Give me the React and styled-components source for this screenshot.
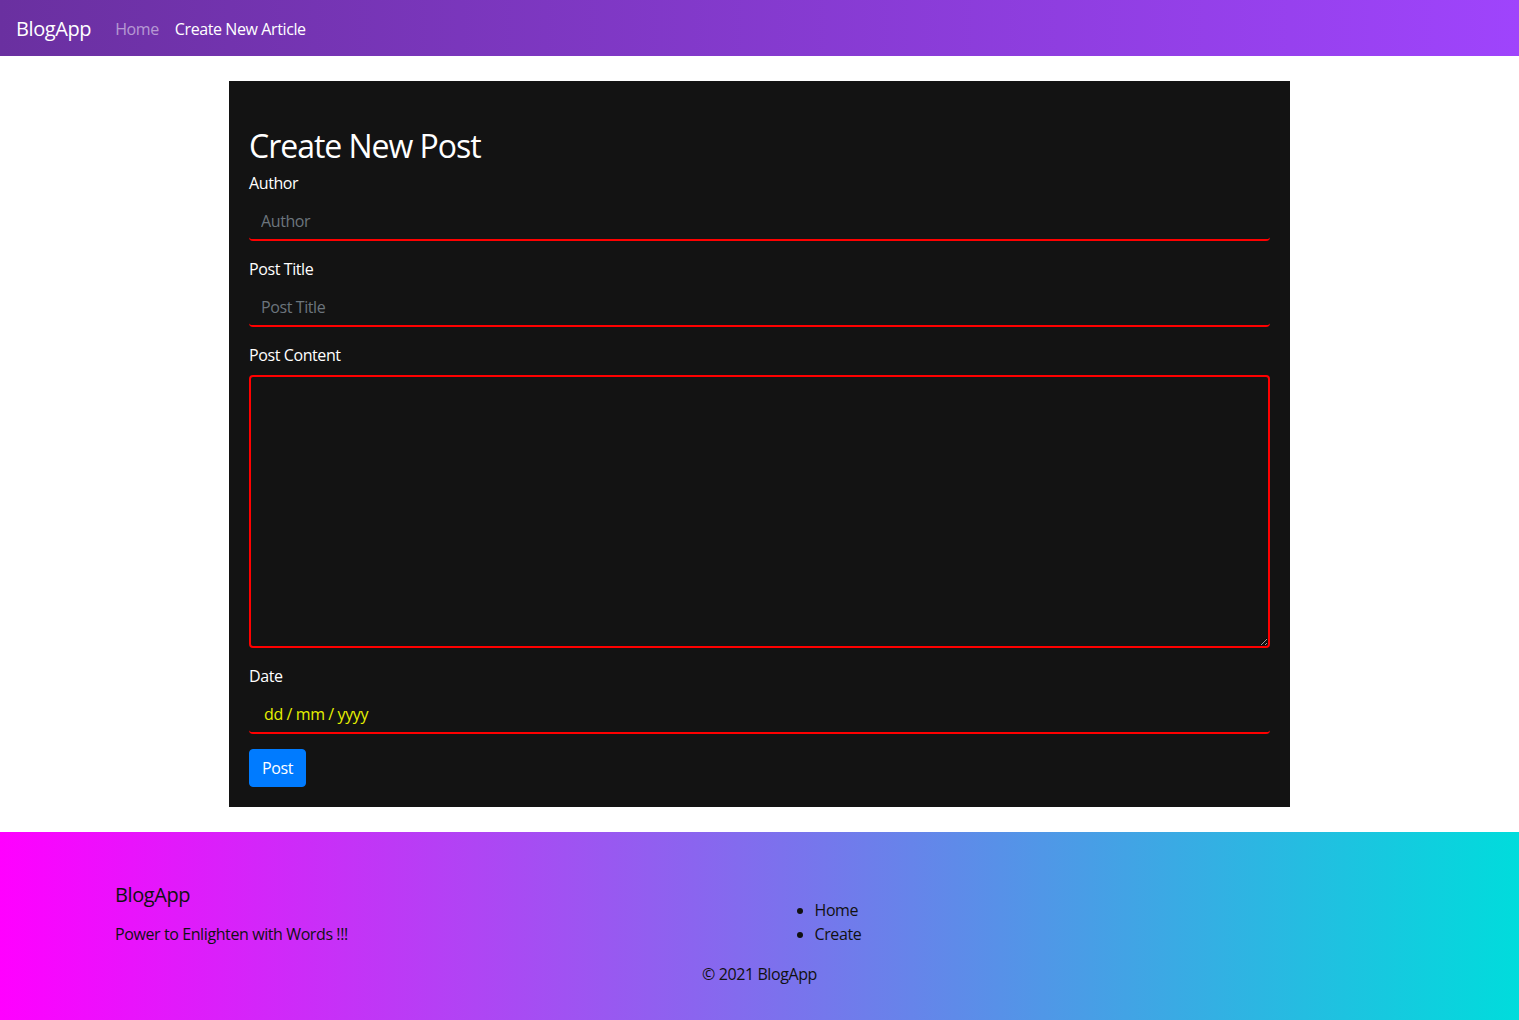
import React from "react";
import styled, { createGlobalStyle } from "styled-components";

const GlobalStyle = createGlobalStyle`
  * { box-sizing: border-box; }
  body {
    margin: 0;
    background: #fff;
    font-family: "Segoe UI", "Open Sans", "Noto Sans", sans-serif;
    font-size: 16px;
    line-height: 1.5;
    letter-spacing: -0.025em;
    color: #212529;
  }
`;

const NavBar = styled.nav`
  display: flex;
  align-items: center;
  height: 56px;
  padding: 2px 16px 0;
  background: linear-gradient(to right, #6a30a0, #9f44fc);
`;

const Brand = styled.a`
  font-size: 20px;
  color: #fff;
  margin-right: 16px;
  text-decoration: none;
`;

const NavLink = styled.a`
  padding: 8px;
  color: ${(p) => (p.$active ? "#fff" : "rgba(255,255,255,0.5)")};
  text-decoration: none;
`;

const Main = styled.main`
  padding: 25px 0;
`;

const Card = styled.div`
  width: 1061px;
  margin: 0 auto;
  background: #131313;
  padding: 46px 20px 20px;
  color: #fff;
`;

const Title = styled.h2`
  margin: 0 0 6px;
  font-size: 32px;
  font-weight: 400;
  line-height: 1.2;
  letter-spacing: -0.032em;
`;

const Group = styled.div`
  margin-bottom: ${(p) => p.$mb || "16px"};
`;

const Label = styled.label`
  display: block;
  margin-bottom: 8px;
  color: #fff;
`;

const Field = styled.input`
  display: block;
  width: 100%;
  height: 38px;
  padding: 6px ${(p) => p.$pad || "12px"};
  font: inherit;
  letter-spacing: inherit;
  color: ${(p) => p.$color || "#fff"};
  background: transparent;
  border: none;
  border-bottom: 2px solid #f00;
  border-radius: 4px;
  outline: none;
  &::placeholder { color: #6c757d; }
`;

const Area = styled.textarea`
  display: block;
  width: 100%;
  height: 273px;
  padding: 6px 12px;
  font: inherit;
  color: #fff;
  background: transparent;
  border: 2px solid #f00;
  border-radius: 4px;
  outline: none;
`;

const PostButton = styled.button`
  font: inherit;
  letter-spacing: inherit;
  color: #fff;
  background: #007bff;
  border: 1px solid #007bff;
  border-radius: 4px;
  padding: 6px 12px;
  height: 38px;
`;

const Footer = styled.footer`
  background: linear-gradient(to right, #ff00ff, #00dcdc);
  padding-top: 51px;
  height: 188px;
  color: #111;
`;

const FooterRow = styled.div`
  display: flex;
  padding: 0 100px;
`;

const FooterCol = styled.div`
  flex: 0 0 ${(p) => p.$w};
  padding: 0 15px;
`;

const FooterTitle = styled.h5`
  margin: 0 0 15px;
  font-size: 20px;
  font-weight: 400;
  line-height: 1.2;
`;

const Tagline = styled.p`
  margin: 0;
`;

const LinkList = styled.ul`
  margin: 15px 0 0;
  padding-left: 40px;
  list-style: disc;
`;

const Copyright = styled.div`
  text-align: center;
  padding: 16px 0;
`;

export default function App() {
  return (
    <>
      <GlobalStyle />
      <NavBar>
        <Brand>BlogApp</Brand>
        <NavLink>Home</NavLink>
        <NavLink $active>Create New Article</NavLink>
      </NavBar>
      <Main>
        <Card>
          <Title>Create New Post</Title>
          <Group>
            <Label>Author</Label>
            <Field placeholder="Author" />
          </Group>
          <Group>
            <Label>Post Title</Label>
            <Field placeholder="Post Title" />
          </Group>
          <Group>
            <Label>Post Content</Label>
            <Area />
          </Group>
          <Group $mb="15px">
            <Label>Date</Label>
            <Field $color="#e6f000" $pad="15px" readOnly value="dd / mm / yyyy" />
          </Group>
          <PostButton>Post</PostButton>
        </Card>
      </Main>
      <Footer>
        <FooterRow>
          <FooterCol $w="50%">
            <FooterTitle>BlogApp</FooterTitle>
            <Tagline>Power to Enlighten with Words !!!</Tagline>
          </FooterCol>
          <FooterCol $w="25%">
            <LinkList>
              <li>Home</li>
              <li>Create</li>
            </LinkList>
          </FooterCol>
        </FooterRow>
        <Copyright>© 2021 BlogApp</Copyright>
      </Footer>
    </>
  );
}
